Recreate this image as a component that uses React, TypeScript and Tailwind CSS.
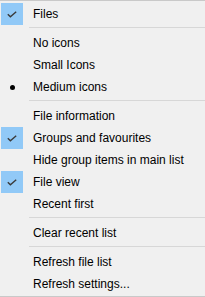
import React from 'react'

type Item =
  | { kind: 'sep' }
  | { kind: 'item'; label: string; mark?: 'check' | 'dot' }

const items: Item[] = [
  { kind: 'item', label: 'Files', mark: 'check' },
  { kind: 'sep' },
  { kind: 'item', label: 'No icons' },
  { kind: 'item', label: 'Small Icons' },
  { kind: 'item', label: 'Medium icons', mark: 'dot' },
  { kind: 'sep' },
  { kind: 'item', label: 'File information' },
  { kind: 'item', label: 'Groups and favourites', mark: 'check' },
  { kind: 'item', label: 'Hide group items in main list' },
  { kind: 'item', label: 'File view', mark: 'check' },
  { kind: 'item', label: 'Recent first' },
  { kind: 'sep' },
  { kind: 'item', label: 'Clear recent list' },
  { kind: 'sep' },
  { kind: 'item', label: 'Refresh file list' },
  { kind: 'item', label: 'Refresh settings...' },
]

function Mark({ mark }: { mark?: 'check' | 'dot' }) {
  if (mark === 'check') {
    return (
      <div className="ml-px flex h-[22px] w-[22px] items-center justify-center bg-[#91c9f7]">
        <svg width="10" height="7" viewBox="0 0 10 7" fill="none">
          <path d="M0.8 3.2l2.6 2.6 5.8-5" stroke="#3a3a3a" strokeWidth="1.4" />
        </svg>
      </div>
    )
  }
  if (mark === 'dot') {
    return (
      <div className="ml-px flex h-[22px] w-[22px] items-center justify-center">
        <div className="h-[5px] w-[5px] rounded-full bg-black" />
      </div>
    )
  }
  return <div className="ml-px h-[22px] w-[22px]" />
}

export default function App() {
  return (
    <div
      className="h-[297px] w-[205px] overflow-hidden border-y border-[#c9c9c9] bg-[#f0f0f0] pb-px pt-[2px] text-[12px] text-black"
      style={{ fontFamily: '"Liberation Sans", Arial, sans-serif' }}
    >
      {items.map((it, i) =>
        it.kind === 'sep' ? (
          <div key={i} className="pb-[4px] pl-[29px] pt-[2px]">
            <div className="h-px bg-[#d7d7d7]" />
          </div>
        ) : (
          <div key={i} className="flex h-[22px] items-center">
            <Mark mark={it.mark} />
            <span className="ml-[10px] whitespace-nowrap">{it.label}</span>
          </div>
        )
      )}
    </div>
  )
}
